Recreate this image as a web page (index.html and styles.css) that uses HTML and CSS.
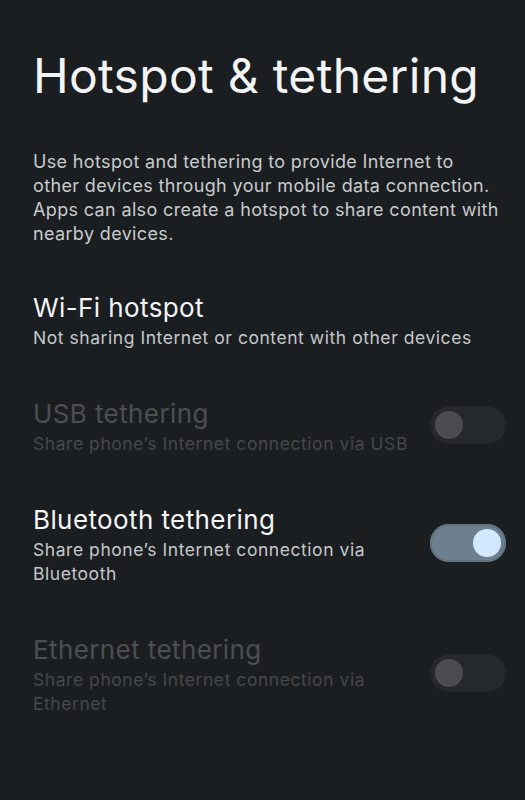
FILE: index.html
```html
<!DOCTYPE html>
<html lang="en">
<head>
<meta charset="utf-8">
<title>Hotspot &amp; tethering</title>
<link rel="stylesheet" href="styles.css">
</head>
<body>
<main class="page">
  <h1 class="page-title">Hotspot &amp; tethering</h1>
  <p class="intro">Use hotspot and tethering to provide Internet to other devices through your mobile data connection. Apps can also create a hotspot to share content with nearby devices.</p>
  <ul class="prefs">
    <li class="pref">
      <div class="pref-text">
        <div class="pref-title">Wi-Fi hotspot</div>
        <div class="pref-summary">Not sharing Internet or content with other devices</div>
      </div>
    </li>
    <li class="pref pref-disabled">
      <div class="pref-text">
        <div class="pref-title">USB tethering</div>
        <div class="pref-summary">Share phone’s Internet connection via USB</div>
      </div>
      <span class="switch"><span class="thumb"></span></span>
    </li>
    <li class="pref">
      <div class="pref-text">
        <div class="pref-title">Bluetooth tethering</div>
        <div class="pref-summary">Share phone’s Internet connection via Bluetooth</div>
      </div>
      <span class="switch switch-on"><span class="thumb"></span></span>
    </li>
    <li class="pref pref-disabled">
      <div class="pref-text">
        <div class="pref-title">Ethernet tethering</div>
        <div class="pref-summary">Share phone’s Internet connection via Ethernet</div>
      </div>
      <span class="switch"><span class="thumb"></span></span>
    </li>
  </ul>
</main>
</body>
</html>
```
FILE: styles.css
```css
html, body {
  margin: 0;
  padding: 0;
  background: #1b1e21;
}
body {
  font-family: Inter, "Noto Sans", sans-serif;
  color: #f1f2f3;
}
.page {
  padding: 48px 19px 40px 33px;
}
.page-title {
  margin: 0;
  font-size: 48px;
  line-height: 56px;
  font-weight: 400;
  letter-spacing: 0.3px;
  color: #f3f4f5;
}
.intro {
  margin: 46px 5px 0 0;
  font-size: 18px;
  line-height: 24px;
  letter-spacing: 0.35px;
  color: #c8cacc;
}
.prefs {
  list-style: none;
  margin: 46px 0 0;
  padding: 0;
  display: flex;
  flex-direction: column;
  gap: 48px;
}
.pref {
  display: flex;
  align-items: center;
  gap: 16px;
}
.pref-text {
  flex: 1;
  display: flex;
  flex-direction: column;
  gap: 2px;
}
.pref-title {
  font-size: 26px;
  line-height: 32px;
  letter-spacing: 0.4px;
  color: #f3f4f5;
}
.pref-summary {
  font-size: 17.5px;
  line-height: 24px;
  letter-spacing: 0.55px;
  color: #c5c8ca;
}
.pref-disabled .pref-title {
  color: #4c4f52;
}
.pref-disabled .pref-summary {
  color: #45484b;
}
.switch {
  flex: none;
  width: 76px;
  height: 38px;
  margin-bottom: 4px;
  border-radius: 19px;
  background: #26292c;
  display: flex;
  align-items: center;
  padding: 0 5px;
  box-sizing: border-box;
}
.thumb {
  width: 28px;
  height: 28px;
  border-radius: 50%;
  background: #4a4c4f;
}
.switch-on {
  background: #6e808d;
  box-shadow: inset 0 0 0 2px #62727e;
  justify-content: flex-end;
}
.switch-on .thumb {
  background: #d1e8ff;
}
```
